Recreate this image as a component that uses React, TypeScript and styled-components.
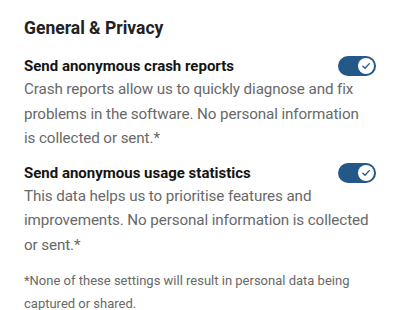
import React, { useState } from 'react';
import styled, { createGlobalStyle } from 'styled-components';

const GlobalStyle = createGlobalStyle`
  html, body {
    margin: 0;
    padding: 0;
    background: #ffffff;
  }
  body {
    font-family: Roboto, 'Liberation Sans', sans-serif;
  }
`;

const Panel = styled.section`
  width: 398px;
  box-sizing: border-box;
  padding: 16px 22px 0 24px;
`;

const Heading = styled.h2`
  margin: 0 0 15px;
  font-size: 17.5px;
  line-height: 24px;
  font-weight: 700;
  color: #222;
`;

const Setting = styled.div`
  margin-bottom: 11px;
`;

const SettingHead = styled.div`
  display: flex;
  align-items: center;
  justify-content: space-between;
`;

const Title = styled.h3`
  margin: 0;
  font-size: 15px;
  line-height: 22px;
  font-weight: 700;
  color: #151515;
`;

const Description = styled.p`
  margin: 0;
  padding-right: 1px;
  font-size: 15.2px;
  line-height: 24.5px;
  letter-spacing: -0.1px;
  color: #686868;
`;

const Footnote = styled.p`
  margin: 13px 0 0;
  font-size: 13px;
  line-height: 22.5px;
  color: #686868;
`;

const Track = styled.button<{ $on: boolean }>`
  width: 38px;
  height: 20px;
  padding: 2px;
  border: none;
  border-radius: 10px;
  background: ${({ $on }) => ($on ? '#245888' : '#b9bec6')};
  display: flex;
  align-items: center;
  justify-content: ${({ $on }) => ($on ? 'flex-end' : 'flex-start')};
  cursor: pointer;
  flex-shrink: 0;
`;

const Knob = styled.span`
  width: 16px;
  height: 16px;
  border-radius: 50%;
  background: #fff;
  display: flex;
  align-items: center;
  justify-content: center;
`;

const Toggle = ({ on, onChange }: { on: boolean; onChange: () => void }) => (
  <Track $on={on} onClick={onChange} aria-pressed={on}>
    <Knob>
      {on && (
        <svg width="10" height="10" viewBox="0 0 10 10">
          <path d="M1.8 5.2 L4 7.3 L8.3 2.6" fill="none" stroke="#245888" strokeWidth="1.3" strokeLinecap="round" strokeLinejoin="round" />
        </svg>
      )}
    </Knob>
  </Track>
);

export default function App() {
  const [crash, setCrash] = useState(true);
  const [usage, setUsage] = useState(true);
  return (
    <>
      <GlobalStyle />
      <Panel>
        <Heading>General &amp; Privacy</Heading>
        <Setting>
          <SettingHead>
            <Title>Send anonymous crash reports</Title>
            <Toggle on={crash} onChange={() => setCrash(!crash)} />
          </SettingHead>
          <Description>
            Crash reports allow us to quickly diagnose and fix problems in the software. No personal information is&nbsp;collected or sent.*
          </Description>
        </Setting>
        <Setting>
          <SettingHead>
            <Title>Send anonymous usage statistics</Title>
            <Toggle on={usage} onChange={() => setUsage(!usage)} />
          </SettingHead>
          <Description>
            This data helps us to prioritise features and improvements. No personal information is collected or sent.*
          </Description>
        </Setting>
        <Footnote>*None of these settings will result in personal data being captured or shared.</Footnote>
      </Panel>
    </>
  );
}
